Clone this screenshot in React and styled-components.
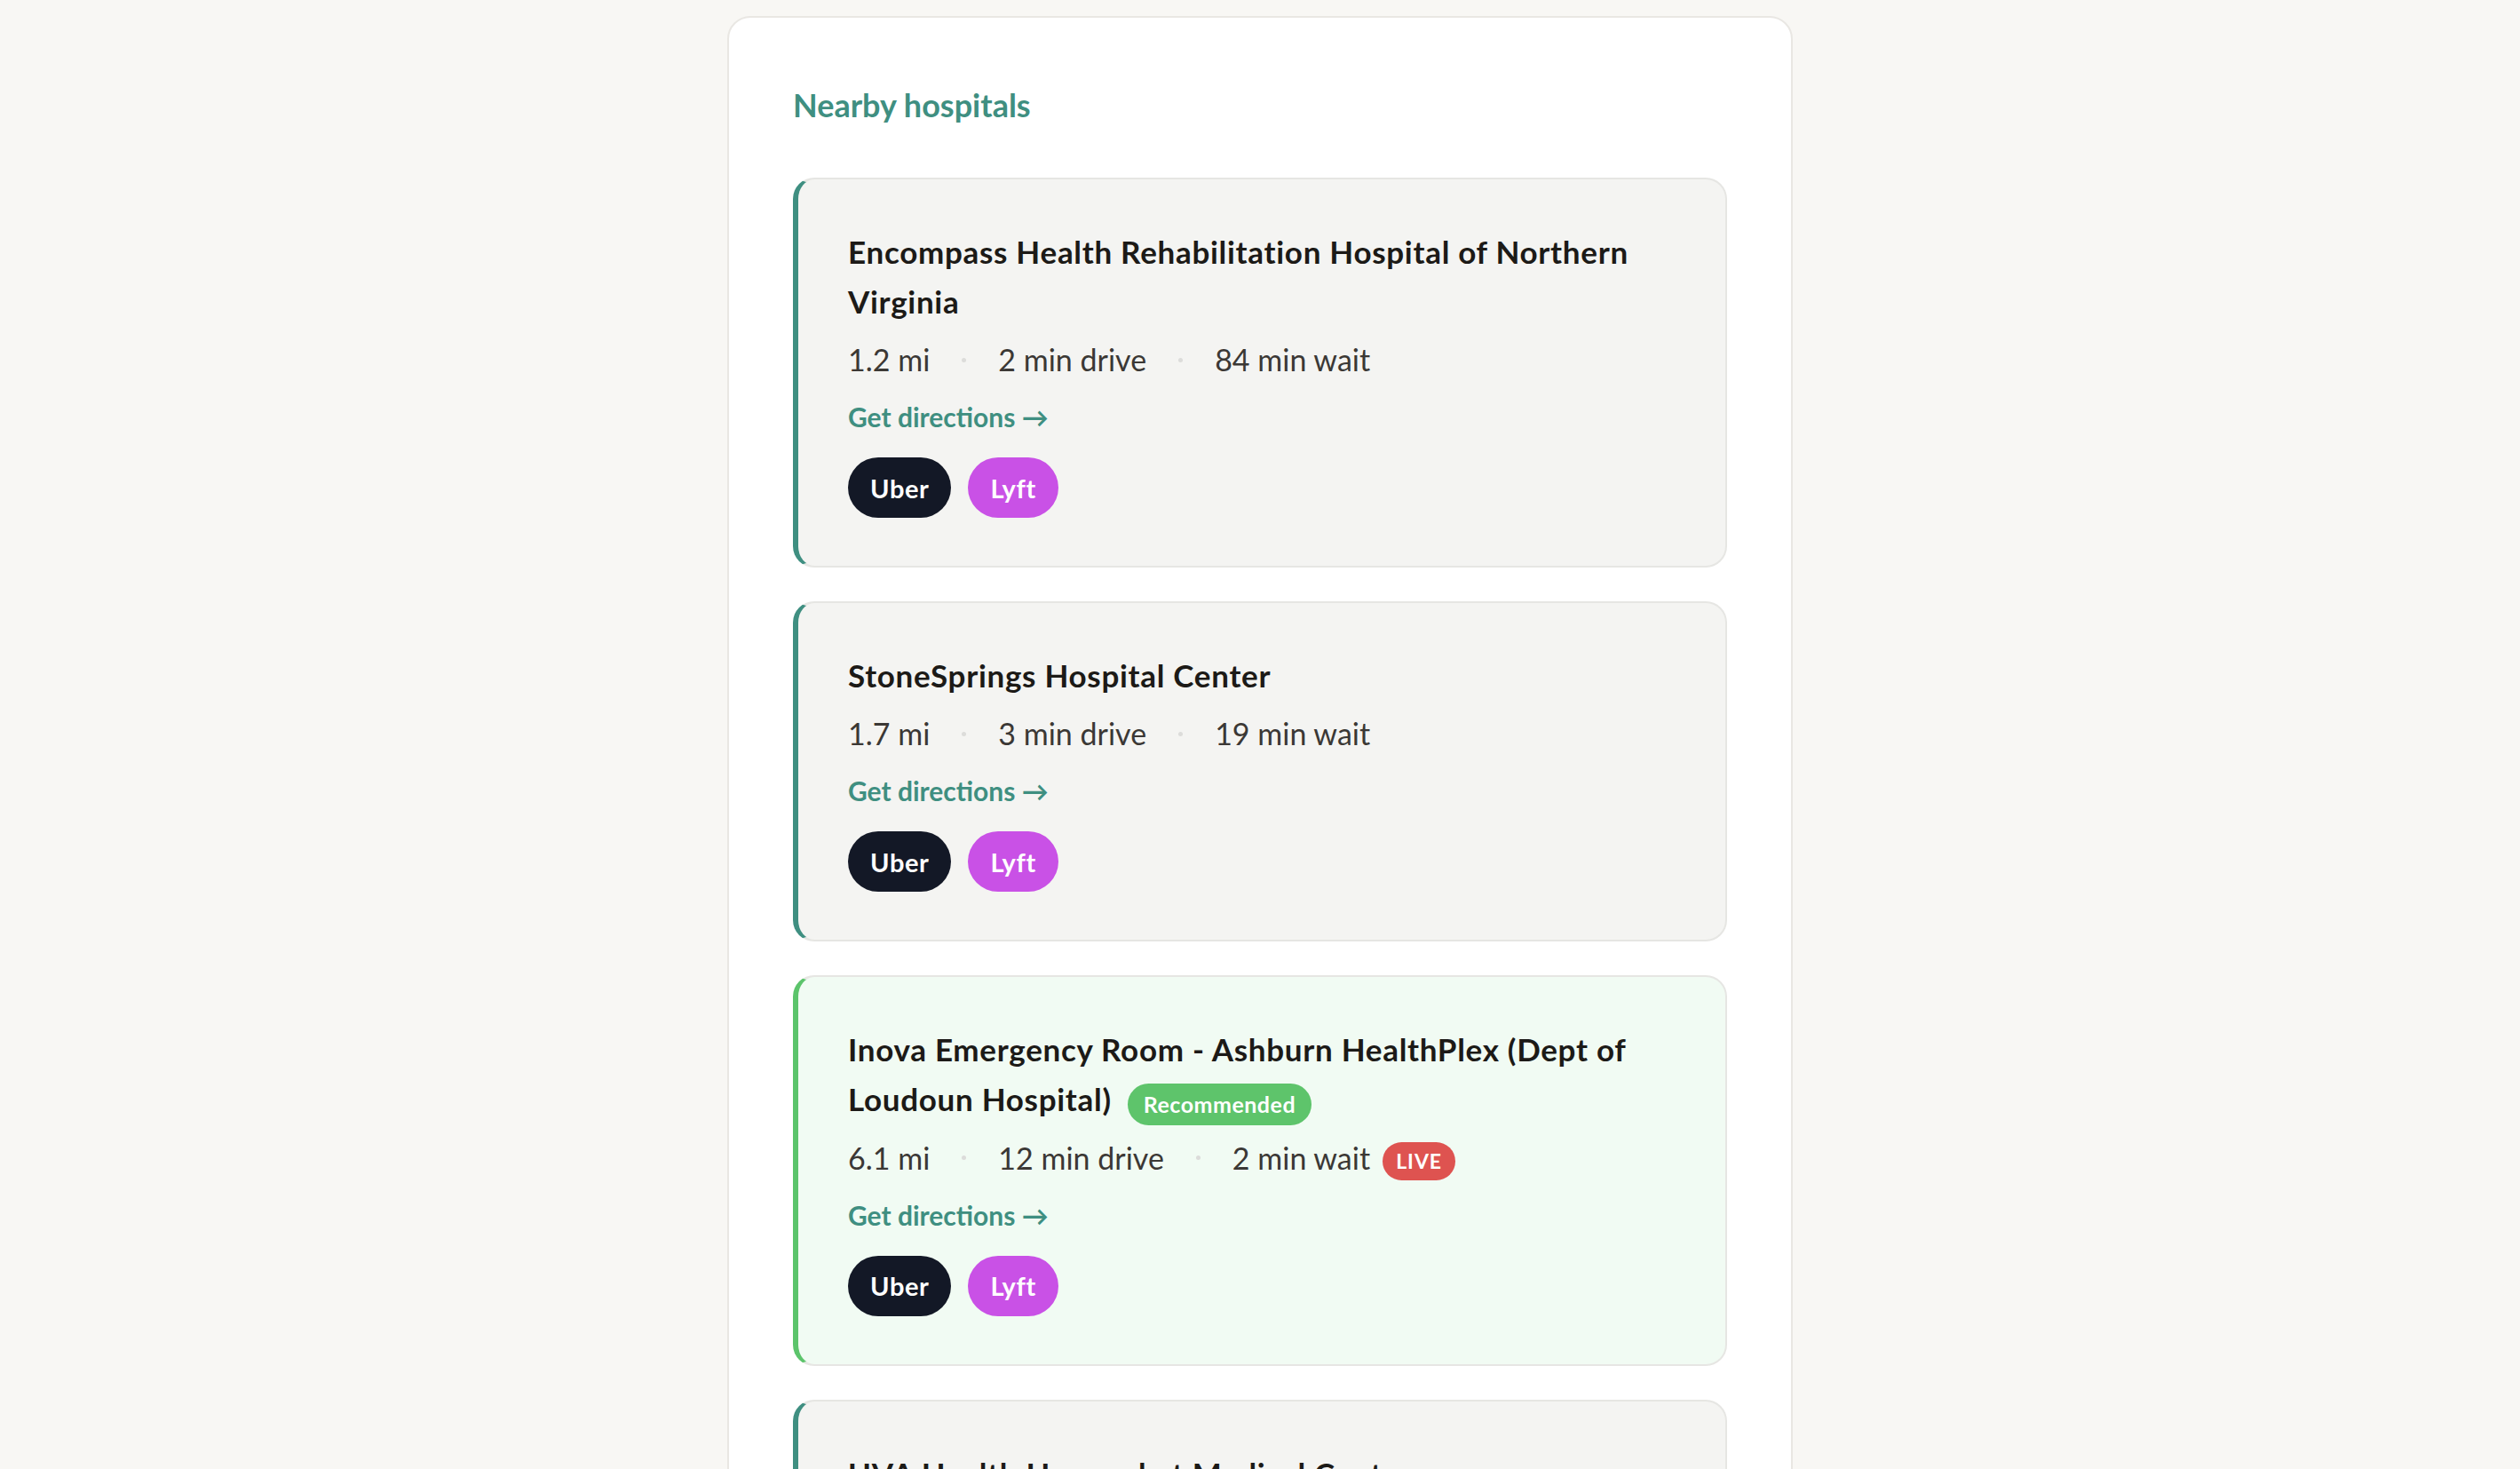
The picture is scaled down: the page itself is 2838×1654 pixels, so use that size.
import styled, { createGlobalStyle } from 'styled-components';

const GlobalStyle = createGlobalStyle`
  html, body {
    margin: 0;
    padding: 0;
    background: #f8f7f4;
  }
  body {
    font-family: Lato, "Noto Sans", sans-serif;
    -webkit-font-smoothing: antialiased;
  }
`;

const Page = styled.div`
  min-height: 100vh;
  display: flex;
  justify-content: center;
  padding-top: 18px;
  box-sizing: border-box;
`;

const Panel = styled.section`
  width: 1200px;
  box-sizing: border-box;
  background: #ffffff;
  border: 2px solid #e9e7e3;
  border-radius: 26px;
  padding: 72px;
`;

const Heading = styled.h2`
  margin: 0 0 56px;
  font-size: 36px;
  line-height: 52px;
  font-weight: 700;
  color: #3f8f81;
`;

const List = styled.div`
  display: flex;
  flex-direction: column;
  gap: 38px;
`;

const Card = styled.article`
  box-sizing: border-box;
  border: 2px solid #e6e6e3;
  border-left: 6px solid ${(p) => (p.$recommended ? '#5cc46b' : '#3f8f81')};
  border-radius: 24px;
  background: ${(p) => (p.$recommended ? '#f1fbf3' : '#f4f4f2')};
  padding: 53px 56px 54px;
`;

const Title = styled.h3`
  margin: 0;
  font-size: 35px;
  line-height: 56px;
  font-weight: 700;
  letter-spacing: 0.7px;
  color: #1c1a17;
`;

const Badge = styled.span`
  display: inline-block;
  vertical-align: middle;
  position: relative;
  top: ${(p) => p.$shift || 0}px;
  margin-left: ${(p) => p.$gap || 18}px;
  padding: 0 ${(p) => p.$pad || 18}px;
  height: ${(p) => p.$h || 47}px;
  line-height: ${(p) => p.$h || 47}px;
  border-radius: 24px;
  background: ${(p) => p.$bg};
  color: #ffffff;
  font-size: ${(p) => p.$size || 25}px;
  font-weight: 700;
  letter-spacing: ${(p) => p.$ls || 0.5}px;
`;

const Meta = styled.div`
  margin-top: 12px;
  display: flex;
  align-items: center;
  gap: 36px;
  font-size: 34px;
  line-height: 52px;
  color: #3b3835;
`;

const MetaItem = styled.span`
  display: inline-flex;
  align-items: center;
`;

const Dot = styled.span`
  width: 5px;
  height: 5px;
  border-radius: 50%;
  background: #dcdcda;
`;

const Directions = styled.a`
  display: block;
  width: fit-content;
  margin-top: 16px;
  font-size: 30px;
  line-height: 44px;
  font-weight: 700;
  color: #3f8f81;
  text-decoration: none;
`;

const Rides = styled.div`
  margin-top: 24px;
  display: flex;
  gap: 19px;
`;

const RideButton = styled.button`
  height: 68px;
  padding: 0 25px;
  border: none;
  border-radius: 34px;
  background: ${(p) => p.$bg};
  color: #ffffff;
  font-family: inherit;
  font-size: 29px;
  font-weight: 700;
  letter-spacing: 0.6px;
  cursor: pointer;
`;

const hospitals = [
  {
    name: 'Encompass Health Rehabilitation Hospital of Northern Virginia',
    distance: '1.2 mi',
    drive: '2 min drive',
    wait: '84 min wait',
  },
  {
    name: 'StoneSprings Hospital Center',
    distance: '1.7 mi',
    drive: '3 min drive',
    wait: '19 min wait',
  },
  {
    name: 'Inova Emergency Room - Ashburn HealthPlex (Dept of Loudoun Hospital)',
    distance: '6.1 mi',
    drive: '12 min drive',
    wait: '2 min wait',
    recommended: true,
    live: true,
  },
  {
    name: 'UVA Health Haymarket Medical Center',
    distance: '8.4 mi',
    drive: '14 min drive',
    wait: '27 min wait',
  },
];

const HospitalCard = ({ h }) => (
  <Card $recommended={h.recommended}>
    <Title>
      {h.name}
      {h.recommended && (
        <Badge $bg="#5ec46b" $shift={1}>
          Recommended
        </Badge>
      )}
    </Title>
    <Meta>
      <MetaItem>{h.distance}</MetaItem>
      <Dot />
      <MetaItem>{h.drive}</MetaItem>
      <Dot />
      <MetaItem>
        {h.wait}
        {h.live && (
          <Badge $bg="#de5350" $gap={14} $pad={15} $h={43} $size={23} $ls={1} $shift={4}>
            LIVE
          </Badge>
        )}
      </MetaItem>
    </Meta>
    <Directions href="#">Get directions →</Directions>
    <Rides>
      <RideButton $bg="#131826">Uber</RideButton>
      <RideButton $bg="#c951e6">Lyft</RideButton>
    </Rides>
  </Card>
);

export default function App() {
  return (
    <>
      <GlobalStyle />
      <Page>
        <Panel>
          <Heading>Nearby hospitals</Heading>
          <List>
            {hospitals.map((h) => (
              <HospitalCard key={h.name} h={h} />
            ))}
          </List>
        </Panel>
      </Page>
    </>
  );
}
